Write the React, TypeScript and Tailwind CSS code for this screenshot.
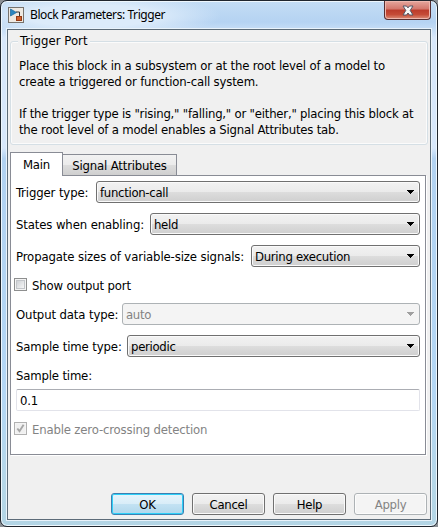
import type { ReactNode } from "react";

function Label({ children, width }: { children: ReactNode; width: string }) {
  return <span className={`shrink-0 pt-[2px] tracking-[-0.12px] whitespace-nowrap ${width}`}>{children}</span>;
}

function Select({ value, disabled }: { value: string; disabled?: boolean }) {
  return (
    <div
      className={`flex h-[22px] min-w-0 flex-1 items-center justify-between rounded-[3px] border pr-[5px] pl-[3px] ${
        disabled
          ? "border-[#adb2b5] bg-[#f4f4f4] text-[#838383]"
          : "border-[#707070] bg-[linear-gradient(#f2f2f2_0%,#ebebeb_48%,#dddddd_50%,#cfcfcf_100%)] shadow-[inset_0_0_0_1px_#fafafa]"
      }`}
    >
      <span className="pt-[2px] tracking-[-0.3px] whitespace-nowrap">{value}</span>
      <svg width="7" height="4" viewBox="0 0 7 4" shapeRendering="crispEdges" className="mb-px">
        <path d="M0 0h7v1H6v1H5v1H4v1H3V3H2V2H1V1H0z" fill={disabled ? "#a0a0a0" : "#000"} />
      </svg>
    </div>
  );
}

function Checkbox({ label, checked, disabled }: { label: string; checked?: boolean; disabled?: boolean }) {
  return (
    <div className={`flex h-[13px] items-center gap-[5px] ${disabled ? "text-[#838383]" : ""}`}>
      <span
        className={`flex size-[13px] items-center justify-center border bg-[#f4f4f4] ${
          disabled ? "border-[#b1b1b1]" : "border-[#8e8f8f]"
        }`}
      >
        <span
          className={`flex size-[9px] items-center justify-center ${
            disabled ? "bg-[#f0f0f0]" : "border border-[#c3c6ca] bg-linear-to-br from-[#cfd2d6] to-[#f6f6f6]"
          }`}
        >
          {checked && (
            <svg width="9" height="9" viewBox="0 0 9 9">
              <path d="M1.3 4.5 3.5 7.2 7.6 .8" fill="none" stroke="#a6a6a6" strokeWidth="1.9" />
            </svg>
          )}
        </span>
      </span>
      <span className="pt-[3px] whitespace-nowrap">{label}</span>
    </div>
  );
}

function Button({ label, kind }: { label: string; kind?: "primary" | "disabled" }) {
  const look =
    kind === "primary"
      ? "border-[#3c7fb1] bg-[linear-gradient(#e6f4fb_0%,#d9edf8_48%,#c3e2f3_50%,#b0d7ec_100%)] shadow-[inset_0_0_0_1px_#2fd0f8]"
      : kind === "disabled"
        ? "border-[#adb2b5] bg-[#f4f4f4] text-[#838383] shadow-[inset_0_0_0_1px_#fcfcfc]"
        : "border-[#707070] bg-[linear-gradient(#f2f2f2_0%,#ebebeb_48%,#dddddd_50%,#cfcfcf_100%)] shadow-[inset_0_0_0_1px_#fafafa]";
  return (
    <div
      className={`flex h-[22px] w-[73px] items-center justify-center rounded-[3px] border pt-[2px] tracking-[-0.3px] ${look}`}
    >
      {label}
    </div>
  );
}

export default function App() {
  return (
    <div className="h-[527px] w-[438px] bg-[#8b8f94] font-['DejaVu_Sans_Condensed','DejaVu_Sans',sans-serif] text-[13px] leading-4 tracking-[-0.17px] text-black [font-stretch:condensed]">
      <div className="flex h-full flex-col rounded-[7px] border border-[#20262e] bg-[radial-gradient(ellipse_130px_22px_at_90px_15px,#dcebfa_50%,transparent_100%),linear-gradient(#c4ddf5_0%,#b5d3f2_4%,#d8e8fb_7%,#d8e8fb_28%,#b2d2f1_30%,#b4d7f5_75%,#b6d7e8_92%,#b3d5e5_100%)] px-[6px] pb-[6px] shadow-[inset_0_0_0_1px_#eef7fd]">
        <header className="flex h-[28px] items-start justify-between">
          <div className="flex h-[27px] items-center gap-[6px] pl-px">
            <svg width="16" height="16" viewBox="0 0 16 16" className="mt-px">
              <rect x=".5" y=".5" width="15" height="15" fill="#eee9e2" stroke="#77736e" />
              <path d="M8 5h3.5v4" fill="none" stroke="#333" />
              <path d="M2.5 2v7l6-3.5z" fill="#2b86bf" stroke="#17659a" strokeWidth=".7" />
              <rect x="8.5" y="9.5" width="5" height="4" fill="#d1602b" stroke="#943b16" />
            </svg>
            <span className="font-['Noto_Sans',sans-serif] text-[12px] tracking-[-0.42px]">Block Parameters: Trigger</span>
          </div>
          <div className="flex h-[19px] w-[47px] items-center justify-center rounded-b-[4px] border border-t-0 border-[#572e31] bg-[linear-gradient(#e5a79e_0%,#d3766b_45%,#bb3b2b_50%,#c54b37_75%,#dc8d78_100%)] shadow-[inset_0_0_0_1px_#eeb7ae]">
            <svg width="12" height="11" viewBox="0 0 12 11">
              <path
                d="M1 1h3.5L6 2.9 7.500 1H11L8.200 5.400 11 10H7.500L6 8 4.500 10H1l2.800-4.600z"
                fill="#f7f7f7"
                stroke="#535666"
                strokeWidth="1"
              />
            </svg>
          </div>
        </header>

        <main className="flex min-h-0 flex-1 flex-col border border-[#5c6b78] bg-[#f0f0f0] px-[2px] shadow-[0_0_0_1px_#e9f3fb]">
          <fieldset className="mt-[3px] h-[112px] w-[418px] rounded-[3px] border border-[#d5dfe5] pr-2 pl-[8px] shadow-[inset_0_0_0_1px_#fbfbfb]">
            <legend className="ml-[-1px] bg-[#f0f0f0] px-[2px] tracking-[0.05px]">Trigger Port</legend>
            <p className="mt-[9px] whitespace-nowrap">
              Place this block in a subsystem or at the root level of a model to
              <br />
              create a triggered or function-call system.
            </p>
            <p className="mt-4 tracking-[-0.21px] whitespace-nowrap">
              If the trigger type is "rising," "falling," or "either," placing this block at
              <br />
              the root level of a model enables a Signal Attributes tab.
            </p>
          </fieldset>

          <div className="mt-[6px] flex h-[24px] items-end">
            <div className="z-10 mb-[-1px] flex h-[24px] w-[53px] items-center justify-center border border-b-0 border-[#898c95] bg-white">
              Main
            </div>
            <div className="flex h-[21px] w-[114px] items-center justify-center border border-b-0 border-l-0 border-[#898c95] bg-[linear-gradient(#f2f2f2_0%,#ebebeb_48%,#dddddd_50%,#cfcfcf_100%)] pt-[2px]">
              Signal Attributes
            </div>
          </div>

          <section className="h-[280px] w-[416px] border border-[#898c95] bg-white px-[5px] shadow-[1px_1px_0_#fff]">
            <div className="mt-[5px] flex items-center">
              <Label width="w-[80px]">Trigger type:</Label>
              <Select value="function-call" />
            </div>
            <div className="mt-[10px] flex items-center">
              <Label width="w-[134px]">States when enabling:</Label>
              <Select value="held" />
            </div>
            <div className="mt-[10px] flex items-center">
              <Label width="w-[235px]">Propagate sizes of variable-size signals:</Label>
              <Select value="During execution" />
            </div>
            <div className="mt-[11px] ml-[-2px]">
              <Checkbox label="Show output port" />
            </div>
            <div className="mt-[12px] flex items-center">
              <Label width="w-[106px]">Output data type:</Label>
              <Select value="auto" disabled />
            </div>
            <div className="mt-[10px] flex items-center">
              <Label width="w-[111px]">Sample time type:</Label>
              <Select value="periodic" />
            </div>
            <div className="mt-[11px]">Sample time:</div>
            <div className="mt-[5px] flex h-[22px] items-center rounded-[2px] border border-[#e2e3ea] border-t-[#abadb3] bg-white pt-[2px] pl-[3px]">
              0.1
            </div>
            <div className="mt-[11px] ml-[-2px]">
              <Checkbox label="Enable zero-crossing detection" checked disabled />
            </div>
          </section>

          <footer className="mt-[38px] mr-[1px] flex justify-end gap-[8px]">
            <Button label="OK" kind="primary" />
            <Button label="Cancel" />
            <Button label="Help" />
            <Button label="Apply" kind="disabled" />
          </footer>
        </main>
      </div>
    </div>
  );
}
